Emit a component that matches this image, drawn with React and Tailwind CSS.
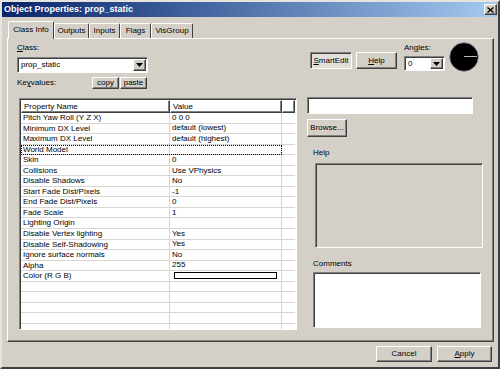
const raised =
  'border border-t-white border-l-white border-r-[#404040] border-b-[#404040] shadow-[inset_-1px_-1px_0_#808080]'
const sunken =
  'border border-t-[#808080] border-l-[#808080] border-r-white border-b-white shadow-[inset_1px_1px_0_#404040]'

const rows = [
  ['Pitch Yaw Roll (Y Z X)', '0 0 0'],
  ['Minimum DX Level', 'default (lowest)'],
  ['Maximum DX Level', 'default (highest)'],
  ['World Model', '', 'focus'],
  ['Skin', '0'],
  ['Collisions', 'Use VPhysics'],
  ['Disable Shadows', 'No'],
  ['Start Fade Dist/Pixels', '-1'],
  ['End Fade Dist/Pixels', '0'],
  ['Fade Scale', '1'],
  ['Lighting Origin', ''],
  ['Disable Vertex lighting', 'Yes'],
  ['Disable Self-Shadowing', 'Yes'],
  ['Ignore surface normals', 'No'],
  ['Alpha', '255'],
  ['Color (R G B)', '', 'color'],
  ['', ''],
  ['', ''],
  ['', ''],
  ['', ''],
  ['', ''],
]

function DropArrow() {
  return (
    <div className={`w-[13px] h-full bg-[#d4d0c8] flex items-center justify-center ${raised}`}>
      <svg width="7" height="4" viewBox="0 0 7 4">
        <path d="M0 0h7L3.5 4z" fill="#000" />
      </svg>
    </div>
  )
}

function Combo({ value, className }) {
  return (
    <div className={`bg-white flex items-stretch p-[1px] ${sunken} ${className}`}>
      <span className="flex-1 pl-[2px] leading-[12px]">{value}</span>
      <DropArrow />
    </div>
  )
}

function Button({ children, className = '' }) {
  return (
    <div className={`bg-[#d4d0c8] flex items-center justify-center ${raised} ${className}`}>
      {children}
    </div>
  )
}

function Tab({ label, active, w }) {
  if (active) {
    return (
      <div
        className={`${w} h-[18px] -mb-[1px] z-10 bg-[#d4d0c8] border border-b-0 border-t-white border-l-white border-r-[#404040] rounded-t-[2px] flex items-center justify-center pb-[1px]`}
      >
        {label}
      </div>
    )
  }
  return (
    <div
      className={`${w} h-[15px] bg-[#d4d0c8] border border-b-0 border-t-white border-l-white border-r-[#404040] rounded-t-[2px] flex items-center justify-center`}
    >
      {label}
    </div>
  )
}

export default function App() {
  return (
    <div
      className="w-[500px] h-[369px] bg-[#d4d0c8] border-2 border-t-[#e6e4df] border-l-[#e6e4df] border-r-[#404040] border-b-[#404040] flex flex-col text-[8px] text-black overflow-hidden"
      style={{ fontFamily: '"Liberation Sans", Arial, sans-serif' }}
    >
      {/* Title bar */}
      <div className="h-[15px] bg-gradient-to-r from-[#0a246a] to-[#a6caf0] flex items-center justify-between pl-[2px] pr-[1px]">
        <span className="text-white font-bold text-[9px]">Object Properties: prop_static</span>
        <div className={`w-[13px] h-[11px] bg-[#d4d0c8] flex items-center justify-center ${raised}`}>
          <svg width="7" height="6" viewBox="0 0 7 6">
            <path d="M0.5 0.5L6.5 5.5M6.5 0.5L0.5 5.5" stroke="#000" strokeWidth="1.4" />
          </svg>
        </div>
      </div>

      <div className="flex flex-col pl-[5px] pr-[4px]">
        {/* Tabs */}
        <div className="flex items-end h-[21px] pl-[1px]">
          <Tab label="Class Info" active w="w-[46px]" />
          <Tab label="Outputs" w="w-[35px]" />
          <Tab label="Inputs" w="w-[31px]" />
          <Tab label="Flags" w="w-[31px]" />
          <Tab label="VisGroup" w="w-[42px]" />
        </div>

        {/* Panel */}
        <div className={`h-[304px] bg-[#d4d0c8] flex ${raised}`}>
          {/* Left column */}
          <div className="w-[290px] pl-[9px] flex flex-col">
            <div className="mt-[4px] leading-[10px]">
              <u>C</u>lass:
            </div>
            <Combo value="prop_static" className="mt-[4px] w-[131px] h-[16px]" />
            <div className="mt-[4px] h-[12px] flex items-center">
              <span className="w-[75px]">
                Ke<u>y</u>values:
              </span>
              <Button className="w-[27px] h-[12px]">copy</Button>
              <Button className="ml-[1px] w-[27px] h-[12px]">paste</Button>
            </div>

            {/* Property grid */}
            <div className={`mt-[9px] ml-[2px] w-[278px] h-[232px] bg-white p-[1px] overflow-hidden ${sunken}`}>
              <div className="flex h-[13px]">
                <div className={`w-[149px] pl-[2px] leading-[11px] ${raised}`}>Property Name</div>
                <div className={`w-[112px] pl-[2px] leading-[11px] ${raised}`}>Value</div>
                <div className={`flex-1 ${raised}`} />
              </div>
              {rows.map(([name, value, kind], i) => (
                <div key={i} className="flex h-[10.55px] relative">
                  <div className="w-[149px] pl-[2px] leading-[10px] border-b border-r border-[#d8d6d0] whitespace-nowrap">
                    {name}
                  </div>
                  <div className="w-[112px] pl-[2px] leading-[10px] border-b border-r border-[#d8d6d0] whitespace-nowrap flex items-center">
                    {kind === 'color' ? (
                      <div className="ml-[2px] w-[103px] h-[7px] border border-black bg-white" />
                    ) : (
                      value
                    )}
                  </div>
                  <div className="flex-1 border-b border-[#d8d6d0]" />
                  {kind === 'focus' && (
                    <div className="absolute left-0 top-0 w-[261px] h-[10px] border border-dotted border-black" />
                  )}
                </div>
              ))}
            </div>
          </div>

          {/* Right column */}
          <div className="flex flex-col">
            <div className="h-[58px] flex items-start">
              <div className={`ml-[12px] mt-[13px] w-[42px] h-[17px] bg-[#e2dfd9] flex items-center justify-center ${sunken}`}>
                <span>
                  <u>S</u>martEdit
                </span>
              </div>
              <Button className="ml-[4px] mt-[13px] w-[41px] h-[17px]">
                <span>
                  <u>H</u>elp
                </span>
              </Button>
              <div className="ml-[7px] mt-[4px] flex flex-col">
                <span className="leading-[10px]">
                  An<u>g</u>les:
                </span>
                <Combo value="0" className="mt-[3px] w-[41px] h-[15px]" />
              </div>
              <svg className="ml-[4px] mt-[3px]" width="30" height="30" viewBox="0 0 30 30">
                <circle cx="15" cy="15" r="14.3" fill="#000" stroke="#8a8a8a" strokeWidth="0.8" />
                <line x1="15" y1="14.5" x2="28" y2="14.5" stroke="#b8b8b8" strokeWidth="1" />
              </svg>
            </div>
            <div className={`ml-[9px] w-[166px] h-[17px] bg-white ${sunken}`} />
            <Button className="ml-[9px] mt-[5px] w-[40px] h-[18px]">Browse...</Button>
            <div className="ml-[15px] mt-[11px] leading-[10px]">Help</div>
            <div className={`ml-[17px] mt-[5px] w-[168px] h-[85px] bg-[#d4d0c8] ${sunken}`} />
            <div className="ml-[15px] mt-[11px] leading-[10px]">Comments</div>
            <div className={`ml-[15px] mt-[3px] w-[168px] h-[56px] bg-white ${sunken}`} />
          </div>
        </div>

        {/* Footer buttons */}
        <div className="mt-[4px] flex justify-end gap-[5px] pr-[2px]">
          <Button className="w-[56px] h-[16px]">Cancel</Button>
          <Button className="w-[55px] h-[16px]">
            <span>
              <u>A</u>pply
            </span>
          </Button>
        </div>
      </div>
    </div>
  )
}
